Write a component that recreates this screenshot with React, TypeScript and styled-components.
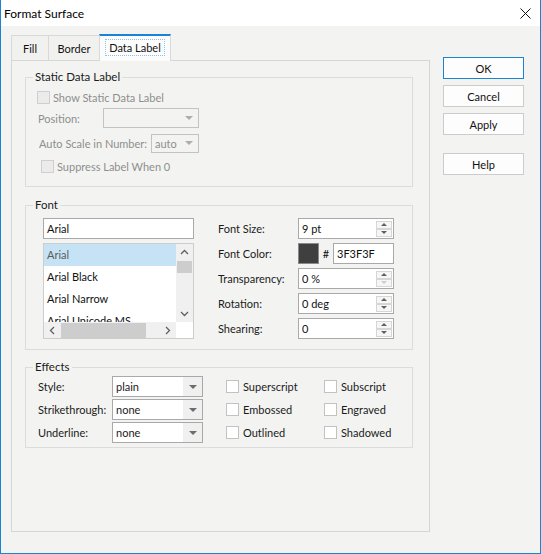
import React from "react";
import styled, { createGlobalStyle } from "styled-components";

const GlobalStyle = createGlobalStyle`
  html, body {
    margin: 0;
    padding: 0;
    background: #f3f4f1;
  }
  body {
    font-family: Lato, "Noto Sans", "Liberation Sans", sans-serif;
    font-size: 11px;
    color: #1b1b1b;
  }
  * {
    box-sizing: border-box;
  }
`;

const Window = styled.div`
  width: 541px;
  height: 554px;
  display: flex;
  flex-direction: column;
  background: #f3f4f1;
  border: 1px solid #1a83d4;
  border-top: none;
`;

const TitleBar = styled.div`
  height: 26px;
  flex: none;
  display: flex;
  align-items: center;
  justify-content: space-between;
  background: #ffffff;
  padding-left: 3px;
  font-size: 12px;
  color: #000;
`;

const CloseButton = styled.div`
  width: 30px;
  height: 26px;
  display: flex;
  align-items: center;
  justify-content: center;
`;

const Body = styled.div`
  display: flex;
  padding: 8px 0 0 10px;
`;

const LeftColumn = styled.div`
  width: 419px;
  display: flex;
  flex-direction: column;
`;

const TabStrip = styled.div`
  height: 26px;
  display: flex;
  align-items: flex-end;
`;

const Tab = styled.div<{ $width: number; $active?: boolean }>`
  position: relative;
  z-index: 1;
  width: ${(p) => p.$width}px;
  height: ${(p) => (p.$active ? 27 : 25)}px;
  margin-left: -1px;
  margin-bottom: ${(p) => (p.$active ? -1 : 0)}px;
  display: flex;
  align-items: center;
  justify-content: center;
  padding-bottom: ${(p) => (p.$active ? 3 : 0)}px;
  border: 1px solid #d9d9d9;
  border-bottom: none;
  border-top: ${(p) => (p.$active ? "2px solid #1a83d4" : "1px solid #d9d9d9")};
  background: ${(p) => (p.$active ? "#fcfcfc" : "#f1f2ef")};
  color: #111;
  &:first-child {
    margin-left: 0;
  }
`;

const FocusText = styled.span`
  padding: 1px 3px;
  outline: 1px dotted #8fc0ea;
`;

const Panel = styled.div`
  width: 419px;
  height: 472px;
  border: 1px solid #d6d6d6;
  padding: 16px 16px 0 13px;
  display: flex;
  flex-direction: column;
`;

const Group = styled.div<{ $height: number; $top?: number; $pt: number; $pl: number }>`
  position: relative;
  height: ${(p) => p.$height}px;
  margin-top: ${(p) => p.$top ?? 0}px;
  padding: ${(p) => p.$pt}px 0 0 ${(p) => p.$pl}px;
  border: 1px solid #dcdcdc;
`;

const GroupTitle = styled.span`
  position: absolute;
  top: -9px;
  left: 7px;
  padding: 0 2px;
  line-height: 16px;
  font-size: 11.5px;
  background: #f3f4f1;
  color: #1b1b1b;
`;

const Row = styled.div<{ $top?: number; $indent?: number; $width?: number }>`
  display: flex;
  align-items: center;
  height: 20px;
  margin-top: ${(p) => p.$top ?? 0}px;
  padding-left: ${(p) => p.$indent ?? 0}px;
  width: ${(p) => (p.$width ? `${p.$width}px` : "auto")};
`;

const Text = styled.span<{ $disabled?: boolean }>`
  color: ${(p) => (p.$disabled ? "#8e8e8e" : "#1b1b1b")};
  white-space: nowrap;
`;

const Box = styled.span<{ $disabled?: boolean }>`
  flex: none;
  width: 13px;
  height: 13px;
  margin-right: ${(p) => (p.$disabled ? 3 : 4)}px;
  border: 1px solid ${(p) => (p.$disabled ? "#cfcfcf" : "#c2c2c2")};
  background: ${(p) => (p.$disabled ? "#ebebeb" : "#ffffff")};
`;

const SelectBox = styled.div<{ $width: number; $disabled?: boolean; $height?: number; $push?: boolean }>`
  display: flex;
  flex: none;
  width: ${(p) => p.$width}px;
  height: ${(p) => p.$height ?? 21}px;
  margin-left: ${(p) => (p.$push ? "auto" : "0")};
  border: 1px solid ${(p) => (p.$disabled ? "#c3c3c3" : "#a9a9a9")};
  background: ${(p) => (p.$disabled ? "#f3f4f1" : "#ffffff")};
`;

const SelectValue = styled.span<{ $disabled?: boolean }>`
  flex: 1;
  display: flex;
  align-items: center;
  padding-left: 3px;
  color: ${(p) => (p.$disabled ? "#8e8e8e" : "#1b1b1b")};
`;

const SelectArrow = styled.span<{ $disabled?: boolean }>`
  flex: none;
  width: 19px;
  display: flex;
  align-items: center;
  justify-content: center;
  background: ${(p) => (p.$disabled ? "transparent" : "#f0f0f0")};
  &::after {
    content: "";
    border-left: 4px solid transparent;
    border-right: 4px solid transparent;
    border-top: 4px solid ${(p) => (p.$disabled ? "#adadad" : "#6d6d6d")};
  }
`;

const FontBody = styled.div`
  display: flex;
  gap: 24px;
`;

const FontColumn = styled.div`
  width: 151px;
  display: flex;
  flex-direction: column;
  gap: 4px;
`;

const TextBox = styled.div<{ $width?: number }>`
  display: flex;
  align-items: center;
  width: ${(p) => (p.$width ? `${p.$width}px` : "100%")};
  height: 21px;
  padding-left: 3px;
  border: 1px solid #a9a9a9;
  background: #ffffff;
  color: #111;
`;

const SpinValue = styled.span`
  flex: 1;
`;

const SpinColumn = styled.div`
  width: 16px;
  margin-right: 1px;
  display: flex;
  flex-direction: column;
`;

const SpinButton = styled.span<{ $up?: boolean; $disabled?: boolean }>`
  height: 8px;
  display: flex;
  align-items: center;
  justify-content: center;
  border: 1px solid #d6d6d6;
  background: #f6f6f6;
  &::after {
    content: "";
    border-left: 3px solid transparent;
    border-right: 3px solid transparent;
    ${(p) => (p.$up ? "border-bottom" : "border-top")}: 3px solid
      ${(p) => (p.$disabled ? "#cdcdcd" : "#5f5f5f")};
  }
`;

const ListBox = styled.div`
  height: 96px;
  border: 1px solid #cdcdcd;
  background: #ffffff;
  display: grid;
  grid-template-columns: 1fr 17px;
  grid-template-rows: 1fr 16px;
`;

const ListItems = styled.div`
  overflow: hidden;
`;

const ListItem = styled.div<{ $selected?: boolean }>`
  height: 22px;
  line-height: 22px;
  padding-left: 3px;
  white-space: nowrap;
  background: ${(p) => (p.$selected ? "#c5e3f4" : "transparent")};
  color: ${(p) => (p.$selected ? "#5c5c5c" : "#111")};
`;

const VScroll = styled.div`
  background: #f0f0f0;
  display: flex;
  flex-direction: column;
  align-items: center;
`;

const HScroll = styled.div`
  background: #f0f0f0;
  display: flex;
  align-items: center;
`;

const ScrollButton = styled.span<{ $size: number }>`
  flex: none;
  width: ${(p) => p.$size}px;
  height: ${(p) => p.$size}px;
  display: flex;
  align-items: center;
  justify-content: center;
`;

const VThumb = styled.span`
  width: 15px;
  height: 12px;
  background: #cdcdcd;
`;

const HThumb = styled.span`
  width: 85px;
  height: 15px;
  background: #cdcdcd;
`;

const Spacer = styled.span`
  flex: 1;
`;

const Corner = styled.div`
  background: #ffffff;
`;

const PropGrid = styled.div`
  display: grid;
  grid-template-columns: 80px 96px;
  grid-auto-rows: 21px;
  row-gap: 4px;
  align-items: center;
`;

const ColorField = styled.div`
  display: flex;
  align-items: center;
`;

const Swatch = styled.span<{ $color: string }>`
  width: 21px;
  height: 21px;
  border: 1px solid #8a8a8a;
  background: ${(p) => p.$color};
`;

const Hash = styled.span`
  width: 14px;
  text-align: center;
  color: #111;
`;

const EffectsGrid = styled.div`
  display: grid;
  grid-template-columns: 74px 114px 98px 1fr;
  grid-auto-rows: 21px;
  row-gap: 2px;
  align-items: center;
`;

const CheckItem = styled.div`
  display: flex;
  align-items: center;
`;

const ButtonColumn = styled.div`
  margin-left: 13px;
  padding-top: 23px;
  display: flex;
  flex-direction: column;
`;

const Button = styled.div<{ $primary?: boolean; $gap?: number }>`
  width: 81px;
  height: 22px;
  margin-bottom: ${(p) => p.$gap ?? 6}px;
  display: flex;
  align-items: center;
  justify-content: center;
  border: 1px solid ${(p) => (p.$primary ? "#1a83d4" : "#cccccc")};
  background: #fdfdfd;
  color: #111;
`;

const Chevron = ({ dir }: { dir: "up" | "down" | "left" | "right" }) => {
  const rot = { up: 0, right: 90, down: 180, left: 270 }[dir];
  return (
    <svg width="9" height="9" viewBox="0 0 9 9">
      <polyline
        points="1,6 4.5,2.5 8,6"
        fill="none"
        stroke="#606060"
        strokeWidth="1.3"
        transform={`rotate(${rot} 4.5 4.5)`}
      />
    </svg>
  );
};

const Check = ({ label }: { label: string }) => (
  <CheckItem>
    <Box />
    <Text>{label}</Text>
  </CheckItem>
);

const Select = ({ value, width }: { value: string; width: number }) => (
  <SelectBox $width={width}>
    <SelectValue>{value}</SelectValue>
    <SelectArrow />
  </SelectBox>
);

const Spinner = ({ value, downDisabled }: { value: string; downDisabled?: boolean }) => (
  <TextBox>
    <SpinValue>{value}</SpinValue>
    <SpinColumn>
      <SpinButton $up />
      <SpinButton $disabled={downDisabled} />
    </SpinColumn>
  </TextBox>
);

const fonts = ["Arial", "Arial Black", "Arial Narrow", "Arial Unicode MS"];

export default function App() {
  return (
    <>
      <GlobalStyle />
      <Window>
        <TitleBar>
          <span>Format Surface</span>
          <CloseButton>
            <svg width="11" height="11" viewBox="0 0 11 11">
              <path d="M0.5 0.5 L10.5 10.5 M10.5 0.5 L0.5 10.5" stroke="#111" strokeWidth="1" />
            </svg>
          </CloseButton>
        </TitleBar>
        <Body>
          <LeftColumn>
            <TabStrip>
              <Tab $width={38}>Fill</Tab>
              <Tab $width={52}>Border</Tab>
              <Tab $width={72} $active>
                <FocusText>Data Label</FocusText>
              </Tab>
            </TabStrip>
            <Panel>
              <Group $height={110} $pt={9} $pl={0}>
                <GroupTitle>Static Data Label</GroupTitle>
                <Row $indent={11}>
                  <Box $disabled />
                  <Text $disabled>Show Static Data Label</Text>
                </Row>
                <Row $top={1} $indent={12} $width={173}>
                  <Text $disabled>Position:</Text>
                  <SelectBox $width={96} $height={20} $disabled $push>
                    <SelectValue $disabled />
                    <SelectArrow $disabled />
                  </SelectBox>
                </Row>
                <Row $top={5} $indent={13} $width={173}>
                  <Text $disabled>Auto Scale in Number:</Text>
                  <SelectBox $width={48} $height={19} $disabled $push>
                    <SelectValue $disabled>auto</SelectValue>
                    <SelectArrow $disabled />
                  </SelectBox>
                </Row>
                <Row $top={3} $indent={15}>
                  <Box $disabled />
                  <Text $disabled>Suppress Label When 0</Text>
                </Row>
              </Group>

              <Group $height={145} $top={18} $pt={12} $pl={17}>
                <GroupTitle>Font</GroupTitle>
                <FontBody>
                  <FontColumn>
                    <TextBox>Arial</TextBox>
                    <ListBox>
                      <ListItems>
                        {fonts.map((f, i) => (
                          <ListItem key={f} $selected={i === 0}>
                            {f}
                          </ListItem>
                        ))}
                      </ListItems>
                      <VScroll>
                        <ScrollButton $size={17}>
                          <Chevron dir="up" />
                        </ScrollButton>
                        <VThumb />
                        <Spacer />
                        <ScrollButton $size={17}>
                          <Chevron dir="down" />
                        </ScrollButton>
                      </VScroll>
                      <HScroll>
                        <ScrollButton $size={17}>
                          <Chevron dir="left" />
                        </ScrollButton>
                        <HThumb />
                        <Spacer />
                        <ScrollButton $size={17}>
                          <Chevron dir="right" />
                        </ScrollButton>
                      </HScroll>
                      <Corner />
                    </ListBox>
                  </FontColumn>
                  <PropGrid>
                    <Text>Font Size:</Text>
                    <Spinner value="9 pt" />
                    <Text>Font Color:</Text>
                    <ColorField>
                      <Swatch $color="#3f3f3f" />
                      <Hash>#</Hash>
                      <TextBox $width={61}>3F3F3F</TextBox>
                    </ColorField>
                    <Text>Transparency:</Text>
                    <Spinner value="0 %" downDisabled />
                    <Text>Rotation:</Text>
                    <Spinner value="0 deg" />
                    <Text>Shearing:</Text>
                    <Spinner value="0" />
                  </PropGrid>
                </FontBody>
              </Group>

              <Group $height={81} $top={17} $pt={8} $pl={12}>
                <GroupTitle>Effects</GroupTitle>
                <EffectsGrid>
                  <Text>Style:</Text>
                  <Select value="plain" width={91} />
                  <Check label="Superscript" />
                  <Check label="Subscript" />
                  <Text>Strikethrough:</Text>
                  <Select value="none" width={91} />
                  <Check label="Embossed" />
                  <Check label="Engraved" />
                  <Text>Underline:</Text>
                  <Select value="none" width={91} />
                  <Check label="Outlined" />
                  <Check label="Shadowed" />
                </EffectsGrid>
              </Group>
            </Panel>
          </LeftColumn>
          <ButtonColumn>
            <Button $primary>OK</Button>
            <Button>Cancel</Button>
            <Button $gap={18}>Apply</Button>
            <Button>Help</Button>
          </ButtonColumn>
        </Body>
      </Window>
    </>
  );
}
